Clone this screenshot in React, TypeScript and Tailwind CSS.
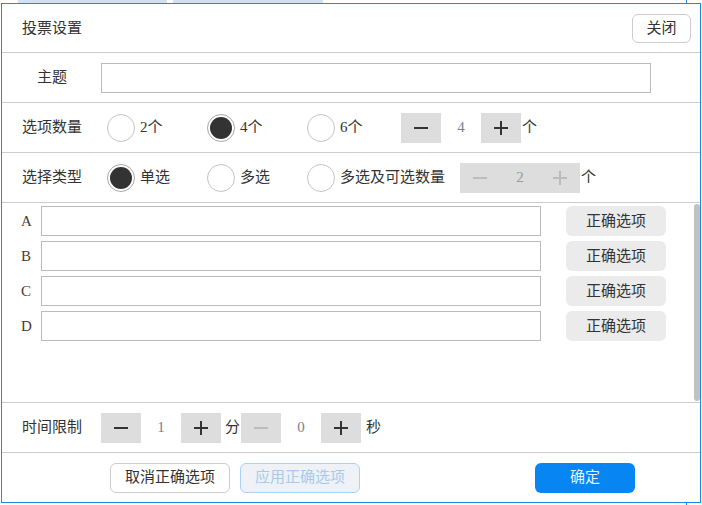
import { useState } from 'react';

const FONT = { fontFamily: '"Liberation Serif", "Noto Sans CJK SC", serif' };

const MinusIcon = ({ color }: { color: string }) => (
  <svg width="16" height="16" viewBox="0 0 16 16">
    <line x1="1" y1="8" x2="15" y2="8" stroke={color} strokeWidth="2" />
  </svg>
);

const PlusIcon = ({ color }: { color: string }) => (
  <svg width="16" height="16" viewBox="0 0 16 16">
    <line x1="1" y1="8" x2="15" y2="8" stroke={color} strokeWidth="2" />
    <line x1="8" y1="1" x2="8" y2="15" stroke={color} strokeWidth="2" />
  </svg>
);

const Stepper = ({
  value,
  disabled = false,
  minusDisabled = false,
}: {
  value: number;
  disabled?: boolean;
  minusDisabled?: boolean;
}) => (
  <div className="flex h-[30px]">
    <button className="w-[40px] h-full bg-[#dddddd] flex items-center justify-center">
      <MinusIcon color={disabled || minusDisabled ? '#bcbcbc' : '#333333'} />
    </button>
    <div
      className={`w-[40px] h-full flex items-center justify-center text-[15px] ${
        disabled ? 'bg-[#dddddd] text-[#999999]' : 'bg-white text-[#7a7f8c]'
      }`}
    >
      {value}
    </div>
    <button className="w-[40px] h-full bg-[#dddddd] flex items-center justify-center">
      <PlusIcon color={disabled ? '#bcbcbc' : '#333333'} />
    </button>
  </div>
);

const Radio = ({ checked, label, width, onClick }: { checked: boolean; label: string; width?: string; onClick: () => void }) => (
  <div className={`flex items-center cursor-pointer ${width ?? ''}`} onClick={onClick}>
    <div
      className={`w-[28px] h-[28px] rounded-full border bg-white flex items-center justify-center ${
        checked ? 'border-[#a8a8a8]' : 'border-[#c4c4c4]'
      }`}
    >
      {checked && <div className="w-[22px] h-[22px] rounded-full bg-[#333333]" />}
    </div>
    <span className="ml-[5px] text-[15px] text-[#333333]">{label}</span>
  </div>
);

const App = () => {
  const [count, setCount] = useState(4);
  const [type, setType] = useState('single');

  return (
    <div className="relative w-[702px] h-[505px] bg-white overflow-hidden" style={FONT}>
      {/* page behind the dialog */}
      <div className="absolute top-0 left-[18px] w-[149px] h-[3px] bg-[#cfe2f3]" />
      <div className="absolute top-0 left-[173px] w-[150px] h-[3px] bg-[#cfe2f3]" />
      <div className="absolute top-0 bottom-0 left-[686px] w-px bg-[#1e88e5]" />

      <div className="absolute left-px top-[3px] w-[700px] h-[500px] border border-[#1e88e5] bg-white flex flex-col text-[#333333]">
        <div className="h-[49px] border-b border-[#cccccc] flex items-center justify-between pl-[20px] pr-[9px]">
          <span className="text-[15px]">投票设置</span>
          <button className="w-[59px] h-[29px] rounded-[6px] border border-[#cccccc] bg-white text-[15px] text-[#333333]">
            关闭
          </button>
        </div>

        <div className="h-[50px] border-b border-[#cccccc] flex items-center pl-[20px]">
          <span className="w-[60px] text-center text-[15px]">主题</span>
          <input className="ml-[19px] w-[550px] h-[30px] border border-[#bbbbbb] outline-none px-2" />
        </div>

        <div className="h-[50px] border-b border-[#cccccc] flex items-center pl-[20px]">
          <span className="w-[60px] text-[15px]">选项数量</span>
          <div className="ml-[25px] flex items-center">
            <Radio checked={count === 2} label="2个" width="w-[100px]" onClick={() => setCount(2)} />
            <Radio checked={count === 4} label="4个" width="w-[100px]" onClick={() => setCount(4)} />
            <Radio checked={count === 6} label="6个" width="w-[94px]" onClick={() => setCount(6)} />
          </div>
          <Stepper value={count} />
          <span className="ml-[1px] text-[15px]">个</span>
        </div>

        <div className="h-[50px] border-b border-[#cccccc] flex items-center pl-[20px]">
          <span className="w-[60px] text-[15px]">选择类型</span>
          <div className="ml-[25px] flex items-center">
            <Radio checked={type === 'single'} label="单选" width="w-[100px]" onClick={() => setType('single')} />
            <Radio checked={type === 'multi'} label="多选" width="w-[100px]" onClick={() => setType('multi')} />
            <Radio checked={type === 'limit'} label="多选及可选数量" onClick={() => setType('limit')} />
          </div>
          <div className="ml-[15px]">
            <Stepper value={2} disabled />
          </div>
          <span className="ml-[1px] text-[15px]">个</span>
        </div>

        <div className="h-[200px] border-b border-[#cccccc] flex">
          <div className="flex-1 pt-[3px] flex flex-col gap-[5px]">
            {['A', 'B', 'C', 'D'].slice(0, count).map((letter) => (
              <div key={letter} className="flex items-center h-[30px]">
                <span className="w-[39px] pl-[19px] text-[15px] text-[#4a3a30]">{letter}</span>
                <input className="w-[500px] h-[30px] border border-[#bbbbbb] outline-none px-2" />
                <button className="ml-[25px] w-[100px] h-[30px] rounded-[6px] bg-[#ebebeb] text-[15px] text-[#333333]">
                  正确选项
                </button>
              </div>
            ))}
          </div>
          <div className="w-[6px] my-px rounded-full bg-[#c1c1c1]" />
        </div>

        <div className="h-[50px] border-b border-[#cccccc] flex items-center pl-[20px]">
          <span className="w-[60px] text-[15px]">时间限制</span>
          <div className="ml-[19px]">
            <Stepper value={1} />
          </div>
          <span className="ml-[4px] text-[15px]">分</span>
          <div className="ml-px">
            <Stepper value={0} minusDisabled />
          </div>
          <span className="ml-[5px] text-[15px]">秒</span>
        </div>

        <div className="flex-1 flex items-center">
          <button className="ml-[108px] w-[120px] h-[30px] rounded-[6px] border border-[#cccccc] bg-white text-[15px] text-[#333333]">
            取消正确选项
          </button>
          <button className="ml-[10px] w-[120px] h-[30px] rounded-[6px] border border-[#a9d2f7] bg-[#eef1f5] text-[15px] text-[#a6cbee]">
            应用正确选项
          </button>
          <button className="ml-[175px] w-[100px] h-[30px] rounded-[6px] bg-[#0785f2] text-[15px] text-[#e8f3ff]">
            确定
          </button>
        </div>
      </div>
    </div>
  );
};

export default App;
